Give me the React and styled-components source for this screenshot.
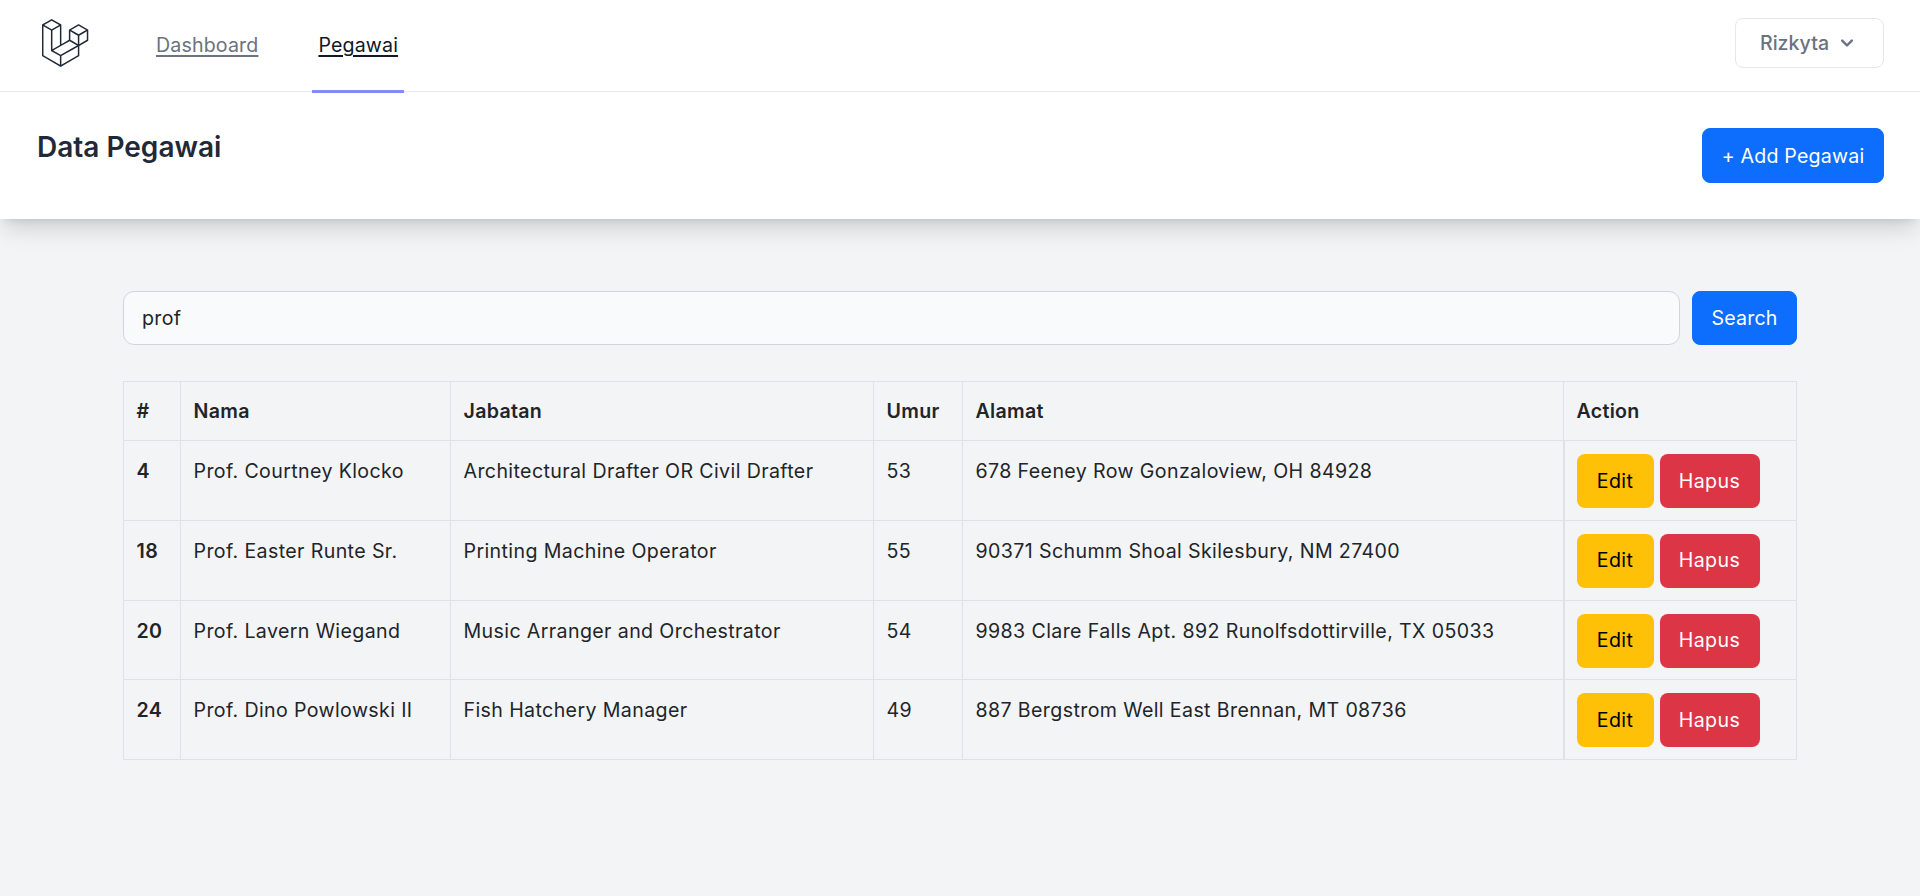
import React from "react";
import styled, { createGlobalStyle } from "styled-components";

const GlobalStyle = createGlobalStyle`
    * { box-sizing: border-box; }
    html, body { margin: 0; padding: 0; }
    body {
        background: #f3f4f6;
        font-family: Inter, "Noto Sans", sans-serif;
        color: #212529;
        min-height: 896px;
        overflow: hidden;
    }
`;

const Nav = styled.nav`
    height: 92px;
    background: #fff;
    border-bottom: 1px solid #e9eaed;
    display: flex;
    justify-content: space-between;
    padding: 0 36px;
    position: relative;
    z-index: 1;
`;
const NavLeft = styled.div`
    display: flex;
    height: 92px;
`;
const LogoBox = styled.a`
    width: 54px;
    height: 54px;
    margin-top: 16px;
    color: #1f2937;
    svg { display: block; width: 54px; height: 54px; fill: currentColor; }
`;
const NavLinks = styled.div`
    display: flex;
    margin-left: 60px;
    gap: 48px;
`;
const NavLink = styled.a`
    height: 93px;
    padding: 0 6px;
    display: flex;
    align-items: center;
    font-size: 19.6px;
    letter-spacing: 0.15px;
    color: ${(p) => (p.$active ? "#111827" : "#6b7280")};
    text-decoration: underline;
    text-decoration-thickness: 2px;
    text-underline-offset: 3px;
    border-bottom: 3px solid ${(p) => (p.$active ? "#818cf8" : "transparent")};
`;
const UserButton = styled.button`
    margin-top: 18px;
    width: 149px;
    height: 50px;
    background: #fff;
    border: 1px solid #e5e7eb;
    border-radius: 8px;
    display: flex;
    align-items: center;
    justify-content: center;
    gap: 6px;
    font: inherit;
    font-size: 19.6px;
    letter-spacing: 0;
    font-weight: 500;
    color: #6b7280;
    svg { width: 24px; height: 24px; fill: currentColor; }
`;
const PageHeader = styled.header`
    height: 127px;
    background: #fff;
    box-shadow: 0 14px 21px -4px rgba(0, 0, 0, 0.14), 0 6px 8px -5px rgba(0, 0, 0, 0.1);
    display: flex;
    justify-content: space-between;
    padding: 36px 36px 0 37px;
    position: relative;
`;
const Title = styled.h2`
    margin: 0;
    font-size: 28px;
    line-height: 38px;
    font-weight: 600;
    letter-spacing: 0;
    color: #1f2937;
`;
const PrimaryButton = styled.button`
    height: 55px;
    padding: 0;
    background: #0d6efd;
    border: 1px solid #0d6efd;
    border-radius: 8px;
    color: #fff;
    font: inherit;
    font-size: 19.6px;
    letter-spacing: 0.2px;
`;
const AddButton = styled(PrimaryButton)`
    width: 182px;
`;
const Main = styled.main`
    padding: 72px 123px 0;
`;
const SearchRow = styled.form`
    display: flex;
    gap: 12px;
    margin-bottom: 36px;
`;
const SearchInput = styled.input`
    flex: 1;
    height: 54px;
    padding: 0 18px;
    background: #f9fafb;
    border: 1px solid #d1d5db;
    border-radius: 11px;
    font: inherit;
    font-size: 19.6px;
    letter-spacing: 0.3px;
    color: #212529;
    outline: none;
`;
const SearchButton = styled(PrimaryButton)`
    width: 105px;
    height: 54px;
`;
const Table = styled.table`
    width: 1673px;
    table-layout: fixed;
    border-collapse: collapse;
    font-size: 19.6px;
    letter-spacing: 0.38px;
`;
const Th = styled.th`
    height: 59px;
    padding: 0 12.5px;
    text-align: left;
    font-weight: 600;
    letter-spacing: 0.3px;
    color: #212529;
    border: 1px solid #dee2e6;
`;
const Td = styled.td`
    padding: 13px 12.5px 11.8px;
    vertical-align: top;
    border: 1px solid #dee2e6;
    font-weight: ${(p) => (p.$bold ? 600 : 400)};
    line-height: 35px;
`;
const ActionCell = styled(Td)`
    border-left-width: 2px;
    padding-left: 12px;
    white-space: nowrap;
`;
const ActionRow = styled.div`
    display: flex;
    gap: 6px;
`;
const ActionButton = styled.a`
    height: 54px;
    width: ${(p) => p.$w}px;
    display: flex;
    align-items: center;
    justify-content: center;
    border-radius: 8px;
    background: ${(p) => p.$bg};
    color: ${(p) => p.$fg};
`;

const rows = [
    { id: 4, nama: "Prof. Courtney Klocko", jabatan: "Architectural Drafter OR Civil Drafter", umur: 53, alamat: "678 Feeney Row Gonzaloview, OH 84928" },
    { id: 18, nama: "Prof. Easter Runte Sr.", jabatan: "Printing Machine Operator", umur: 55, alamat: "90371 Schumm Shoal Skilesbury, NM 27400" },
    { id: 20, nama: "Prof. Lavern Wiegand", jabatan: "Music Arranger and Orchestrator", umur: 54, alamat: "9983 Clare Falls Apt. 892 Runolfsdottirville, TX 05033" },
    { id: 24, nama: "Prof. Dino Powlowski II", jabatan: "Fish Hatchery Manager", umur: 49, alamat: "887 Bergstrom Well East Brennan, MT 08736" },
];

const colWidths = [57, 270, 423, 89, 601, 233];

const Logo = () => (
    <svg viewBox="0 0 316 316" xmlns="http://www.w3.org/2000/svg">
        <path d="M305.8 81.125C305.77 80.995 305.69 80.885 305.65 80.755C305.56 80.525 305.49 80.285 305.37 80.075C305.29 79.935 305.17 79.815 305.07 79.685C304.94 79.515 304.83 79.325 304.68 79.175C304.55 79.045 304.39 78.955 304.25 78.845C304.09 78.715 303.95 78.575 303.77 78.475L251.32 48.275C249.97 47.495 248.31 47.495 246.96 48.275L194.51 78.475C194.33 78.575 194.19 78.725 194.03 78.845C193.89 78.955 193.73 79.045 193.6 79.175C193.45 79.325 193.34 79.515 193.21 79.685C193.11 79.815 192.99 79.935 192.91 80.075C192.79 80.285 192.71 80.525 192.63 80.755C192.58 80.875 192.51 80.995 192.48 81.125C192.38 81.495 192.33 81.875 192.33 82.265V139.625L148.62 164.795V52.575C148.62 52.185 148.57 51.805 148.47 51.435C148.44 51.305 148.36 51.195 148.32 51.065C148.23 50.835 148.16 50.595 148.04 50.385C147.96 50.245 147.84 50.125 147.74 49.995C147.61 49.825 147.5 49.635 147.35 49.485C147.22 49.355 147.06 49.265 146.92 49.155C146.76 49.025 146.62 48.885 146.44 48.785L93.99 18.585C92.64 17.805 90.98 17.805 89.63 18.585L37.18 48.785C37 48.885 36.86 49.035 36.7 49.155C36.56 49.265 36.4 49.355 36.27 49.485C36.12 49.635 36.01 49.825 35.88 49.995C35.78 50.125 35.66 50.245 35.58 50.385C35.46 50.595 35.38 50.835 35.3 51.065C35.25 51.185 35.18 51.305 35.15 51.435C35.05 51.805 35 52.185 35 52.575V232.235C35 233.795 35.84 235.245 37.19 236.025L142.1 296.425C142.33 296.555 142.58 296.635 142.83 296.725C142.95 296.765 143.06 296.835 143.18 296.865C143.55 296.965 143.93 297.015 144.31 297.015C144.69 297.015 145.07 296.965 145.44 296.865C145.56 296.835 145.67 296.765 145.79 296.725C146.04 296.635 146.29 296.555 146.52 296.425L251.43 236.025C252.78 235.245 253.62 233.805 253.62 232.235V174.875L303.76 146.015C305.11 145.235 305.95 143.795 305.95 142.225V82.265C305.95 81.875 305.89 81.495 305.8 81.125ZM144.2 227.205L100.57 202.515L146.39 176.135L196.66 147.195L240.33 172.335L208.29 190.625L144.2 227.205ZM244.75 114.995V164.795L226.39 154.225L201.03 139.625V89.825L219.39 100.395L244.75 114.995ZM249.12 57.105L292.81 82.265L249.12 107.425L205.43 82.265L249.12 57.105ZM114.49 184.425L96.13 194.995V85.305L121.49 70.705L139.85 60.135V169.815L114.49 184.425ZM91.76 27.425L135.45 52.585L91.76 77.745L48.07 52.585L91.76 27.425ZM43.67 60.135L62.03 70.705L87.39 85.305V202.545V202.555V202.565C87.39 202.735 87.44 202.895 87.46 203.055C87.49 203.265 87.49 203.485 87.55 203.695V203.705C87.6 203.875 87.69 204.035 87.76 204.195C87.84 204.375 87.89 204.575 87.99 204.745C87.99 204.745 87.99 204.755 88 204.755C88.09 204.905 88.22 205.035 88.33 205.175C88.45 205.335 88.55 205.495 88.69 205.635L88.7 205.645C88.82 205.765 88.98 205.855 89.12 205.965C89.28 206.085 89.42 206.225 89.59 206.325C89.6 206.325 89.6 206.325 89.61 206.335C89.62 206.335 89.62 206.345 89.63 206.345L139.87 234.775V285.065L43.67 229.705V60.135ZM244.75 229.705L148.58 285.075V234.775L219.8 194.115L244.75 179.875V229.705ZM297.2 139.625L253.49 164.795V114.995L278.85 100.395L297.21 89.825V139.625H297.2Z" />
    </svg>
);

const App = () => {
    return (
        <>
            <GlobalStyle />
            <Nav>
                <NavLeft>
                    <LogoBox><Logo /></LogoBox>
                    <NavLinks>
                        <NavLink>Dashboard</NavLink>
                        <NavLink $active>Pegawai</NavLink>
                    </NavLinks>
                </NavLeft>
                <UserButton>
                    Rizkyta
                    <svg viewBox="0 0 20 20"><path fillRule="evenodd" clipRule="evenodd" d="M5.293 7.293a1 1 0 011.414 0L10 10.586l3.293-3.293a1 1 0 111.414 1.414l-4 4a1 1 0 01-1.414 0l-4-4a1 1 0 010-1.414z" /></svg>
                </UserButton>
            </Nav>
            <PageHeader>
                <Title>Data Pegawai</Title>
                <AddButton>+ Add Pegawai</AddButton>
            </PageHeader>
            <Main>
                <SearchRow>
                    <SearchInput defaultValue="prof" />
                    <SearchButton type="button">Search</SearchButton>
                </SearchRow>
                <Table>
                    <colgroup>
                        {colWidths.map((w, i) => <col key={i} style={{ width: w }} />)}
                    </colgroup>
                    <thead>
                        <tr>
                            <Th>#</Th>
                            <Th>Nama</Th>
                            <Th>Jabatan</Th>
                            <Th>Umur</Th>
                            <Th>Alamat</Th>
                            <Th>Action</Th>
                        </tr>
                    </thead>
                    <tbody>
                        {rows.map((row) => (
                            <tr key={row.id}>
                                <Td $bold>{row.id}</Td>
                                <Td>{row.nama}</Td>
                                <Td>{row.jabatan}</Td>
                                <Td>{row.umur}</Td>
                                <Td>{row.alamat}</Td>
                                <ActionCell>
                                    <ActionRow>
                                        <ActionButton $w={77} $bg="#ffc107" $fg="#000">Edit</ActionButton>
                                        <ActionButton $w={100} $bg="#dc3545" $fg="#fff">Hapus</ActionButton>
                                    </ActionRow>
                                </ActionCell>
                            </tr>
                        ))}
                    </tbody>
                </Table>
            </Main>
        </>
    );
};

export default App;
